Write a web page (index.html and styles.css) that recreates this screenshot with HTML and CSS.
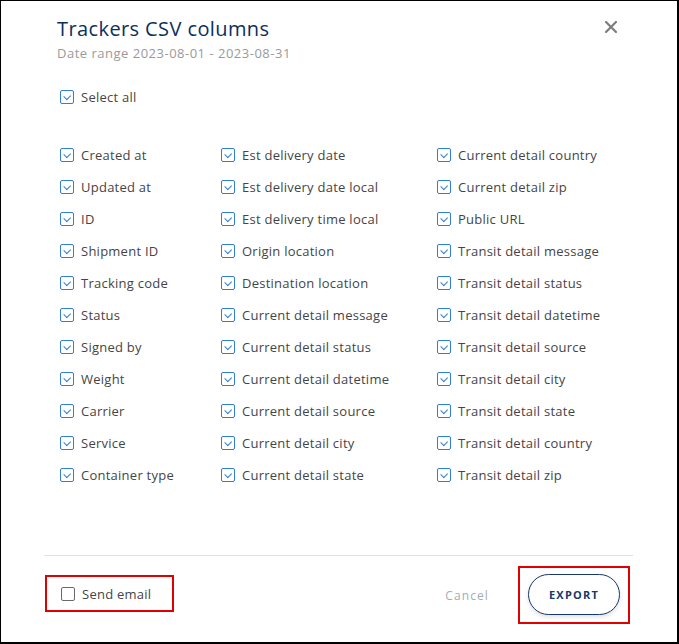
FILE: index.html
```html
<!DOCTYPE html>
<html>
<head>
<meta charset="utf-8">
<link rel="stylesheet" href="styles.css">
</head>
<body>
<div class="frame">
  <div class="modal">
    <div class="header">
      <div>
        <h1 class="title">Trackers CSV columns</h1>
        <div class="subtitle">Date range 2023-08-01 - 2023-08-31</div>
      </div>
      <button class="close" aria-label="Close">
        <svg width="12" height="12" viewBox="0 0 12 12"><path d="M1 1L11 11M11 1L1 11" stroke="#7d7d7d" stroke-width="2.2" stroke-linecap="square"/></svg>
      </button>
    </div>

    <label class="check select-all"><span class="box on"></span>Select all</label>

    <div class="grid">
      <div class="col">
        <label class="check"><span class="box on"></span>Created at</label>
        <label class="check"><span class="box on"></span>Updated at</label>
        <label class="check"><span class="box on"></span>ID</label>
        <label class="check"><span class="box on"></span>Shipment ID</label>
        <label class="check"><span class="box on"></span>Tracking code</label>
        <label class="check"><span class="box on"></span>Status</label>
        <label class="check"><span class="box on"></span>Signed by</label>
        <label class="check"><span class="box on"></span>Weight</label>
        <label class="check"><span class="box on"></span>Carrier</label>
        <label class="check"><span class="box on"></span>Service</label>
        <label class="check"><span class="box on"></span>Container type</label>
      </div>
      <div class="col">
        <label class="check"><span class="box on"></span>Est delivery date</label>
        <label class="check"><span class="box on"></span>Est delivery date local</label>
        <label class="check"><span class="box on"></span>Est delivery time local</label>
        <label class="check"><span class="box on"></span>Origin location</label>
        <label class="check"><span class="box on"></span>Destination location</label>
        <label class="check"><span class="box on"></span>Current detail message</label>
        <label class="check"><span class="box on"></span>Current detail status</label>
        <label class="check"><span class="box on"></span>Current detail datetime</label>
        <label class="check"><span class="box on"></span>Current detail source</label>
        <label class="check"><span class="box on"></span>Current detail city</label>
        <label class="check"><span class="box on"></span>Current detail state</label>
      </div>
      <div class="col">
        <label class="check"><span class="box on"></span>Current detail country</label>
        <label class="check"><span class="box on"></span>Current detail zip</label>
        <label class="check"><span class="box on"></span>Public URL</label>
        <label class="check"><span class="box on"></span>Transit detail message</label>
        <label class="check"><span class="box on"></span>Transit detail status</label>
        <label class="check"><span class="box on"></span>Transit detail datetime</label>
        <label class="check"><span class="box on"></span>Transit detail source</label>
        <label class="check"><span class="box on"></span>Transit detail city</label>
        <label class="check"><span class="box on"></span>Transit detail state</label>
        <label class="check"><span class="box on"></span>Transit detail country</label>
        <label class="check"><span class="box on"></span>Transit detail zip</label>
      </div>
    </div>

    <div class="footer">
      <div class="highlight email-hl">
        <label class="check"><span class="box"></span>Send email</label>
      </div>
      <div class="actions">
        <button class="cancel">Cancel</button>
        <div class="highlight export-hl">
          <button class="export">EXPORT</button>
        </div>
      </div>
    </div>
  </div>
</div>
</body>
</html>
```

FILE: styles.css
```css
* { box-sizing: border-box; }
html, body { margin: 0; padding: 0; background: #fff; }
body { font-family: "Open Sans", "Liberation Sans", sans-serif; }

.frame {
  width: 679px;
  height: 644px;
  border-top: 1px solid #000;
  border-left: 1px solid #000;
  border-right: 2px solid #000;
  border-bottom: 2px solid #000;
  background: #fff;
}

.modal {
  padding: 0 44px 0 43px;
  display: flex;
  flex-direction: column;
  height: 100%;
}

.header {
  display: flex;
  justify-content: space-between;
  align-items: flex-start;
  padding: 15px 0 0 13px;
}
.title {
  margin: 0;
  font-size: 20px;
  font-weight: 400;
  color: #0c2f5e;
  line-height: 26px;
  letter-spacing: 0.4px;
}
.subtitle {
  font-size: 13px;
  color: #9a9a9a;
  line-height: 18px;
  margin-top: 2px;
  letter-spacing: 0.5px;
}
.close {
  border: 0;
  background: none;
  padding: 0;
  margin: 5px 16px 0 0;
  width: 12px;
  height: 12px;
  display: flex;
}

.check {
  display: flex;
  align-items: center;
  gap: 7px;
  font-size: 13px;
  color: #454545;
  height: 16px;
  white-space: nowrap;
  letter-spacing: 0.25px;
}
.box {
  width: 14px;
  height: 14px;
  border: 1.5px solid #6b6b6b;
  border-radius: 2px;
  flex: none;
  position: relative;
}
.box.on {
  border-color: #2f7fd4;
}
.box.on::after {
  content: "";
  position: absolute;
  width: 5px;
  height: 3.5px;
  border-left: 1.5px solid #2f7fd4;
  border-bottom: 1.5px solid #2f7fd4;
  transform: rotate(-45deg);
  transform-origin: center;
  top: 3px;
  left: 3px;
}

.select-all {
  margin: 27px 0 0 16px;
}

.grid {
  display: grid;
  grid-template-columns: 161px 216px 1fr;
  margin: 42px 0 0 16px;
}
.col {
  display: flex;
  flex-direction: column;
  gap: 16px;
}

.footer {
  margin-top: auto;
  border-top: 1px solid #e2e2e2;
  height: 87px;
  display: flex;
  justify-content: space-between;
  align-items: flex-start;
}

.highlight {
  border: 2px solid #e00000;
}
.email-hl {
  margin-top: 19px;
  margin-left: 1px;
  width: 129px;
  height: 37px;
  padding: 0 0 0 14px;
  display: flex;
  align-items: center;
}

.actions {
  display: flex;
  align-items: center;
  margin-top: 10px;
  margin-right: 3px;
}
.cancel {
  border: 0;
  background: none;
  font-family: inherit;
  font-size: 12px;
  color: #a3acb5;
  letter-spacing: 1.1px;
  margin-right: 29px;
  padding: 0;
}
.export-hl {
  width: 112px;
  height: 58px;
  display: flex;
  align-items: center;
  padding: 0 0 1px 8px;
}
.export {
  width: 92px;
  height: 41px;
  border: 1.5px solid #16386a;
  border-radius: 21px;
  background: #fff;
  color: #16386a;
  font-family: inherit;
  font-weight: 700;
  font-size: 11px;
  letter-spacing: 1.2px;
  box-shadow: 0 2px 4px rgba(0,0,0,0.12);
  padding: 0;
}
```
